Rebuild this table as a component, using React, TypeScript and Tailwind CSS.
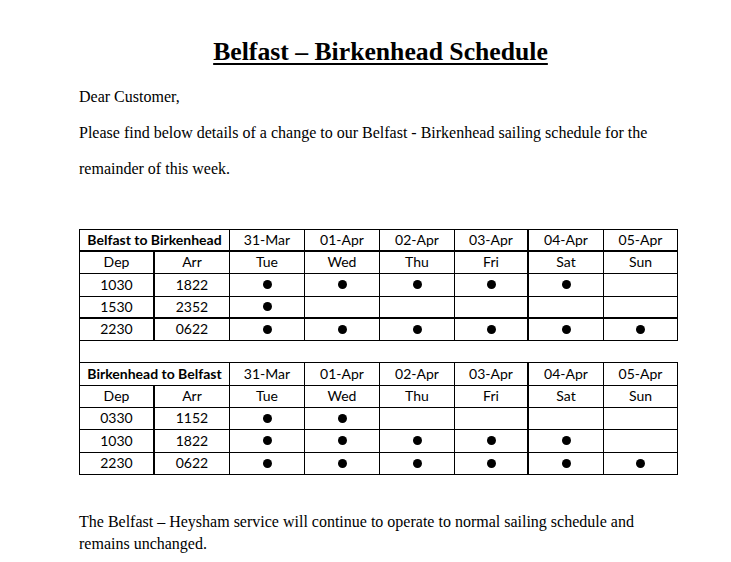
import React from "react";

const dates = ["31-Mar", "01-Apr", "02-Apr", "03-Apr", "04-Apr", "05-Apr"];
const days = ["Tue", "Wed", "Thu", "Fri", "Sat", "Sun"];
const dayW = ["w-[75px]", "w-[75px]", "w-[75px]", "w-[74px]", "w-[75px]", "w-[74px]"];

type Row = { dep: string; arr: string; on: boolean[]; h: string; thickB?: boolean };

const t1: Row[] = [
  { dep: "1030", arr: "1822", on: [true, true, true, true, true, false], h: "h-[23px]" },
  { dep: "1530", arr: "2352", on: [true, false, false, false, false, false], h: "h-[22px]", thickB: true },
  { dep: "2230", arr: "0622", on: [true, true, true, true, true, true], h: "h-[22px]" },
];
const t2: Row[] = [
  { dep: "0330", arr: "1152", on: [true, true, false, false, false, false], h: "h-[22px]" },
  { dep: "1030", arr: "1822", on: [true, true, true, true, true, false], h: "h-[23px]" },
  { dep: "2230", arr: "0622", on: [true, true, true, true, true, true], h: "h-[22px]" },
];

function Dot() {
  return <div className="w-[9px] h-[9px] rounded-full bg-black" />;
}

function cellCls(i: number, thickB?: boolean) {
  return [
    dayW[i],
    "h-full flex items-center justify-center border-black",
    i === 3 ? "border-r-2" : "border-r",
    thickB ? "border-b-2" : "border-b",
  ].join(" ");
}

function Header({ title, h, thickB }: { title: string; h: string; thickB?: boolean }) {
  return (
    <>
      <div className={`flex ${h}`}>
        <div className={`w-[150px] h-full flex items-center justify-center border-r border-black font-bold ${thickB ? "border-b-2" : "border-b"}`}>
          {title}
        </div>
        {dates.map((d, i) => (
          <div key={d} className={cellCls(i, thickB)}>
            {d}
          </div>
        ))}
      </div>
      <div className="flex h-[22px]">
        <div className="w-[75px] h-full flex items-center justify-center border-r-2 border-b border-black">Dep</div>
        <div className="w-[75px] h-full flex items-center justify-center border-r border-b border-black">Arr</div>
        {days.map((d, i) => (
          <div key={d} className={cellCls(i)}>
            {d}
          </div>
        ))}
      </div>
    </>
  );
}

function Rows({ rows }: { rows: Row[] }) {
  return (
    <>
      {rows.map((r, k) => (
        <div key={k} className={`flex ${r.h}`}>
          <div className={`w-[75px] h-full flex items-center justify-center border-r-2 border-black ${r.thickB ? "border-b-2" : "border-b"}`}>{r.dep}</div>
          <div className={`w-[75px] h-full flex items-center justify-center border-r border-black ${r.thickB ? "border-b-2" : "border-b"}`}>{r.arr}</div>
          {r.on.map((o, i) => (
            <div key={i} className={cellCls(i, r.thickB)}>
              {o ? <Dot /> : null}
            </div>
          ))}
        </div>
      ))}
    </>
  );
}

export default function App() {
  return (
    <div className="w-[731px] min-h-[562px] bg-white text-black">
      <div className="pl-[79px] pt-[36px]">
        <h1 className="w-[598px] pl-[5px] text-center font-['Liberation_Serif',serif] font-bold text-[25.7px] leading-[32px] underline decoration-[1.5px] underline-offset-[3px]">
          Belfast – Birkenhead Schedule
        </h1>
        <div className="font-['Liberation_Serif',serif] text-[16px]">
          <p className="mt-[10.6px] leading-[36px]">Dear Customer,</p>
          <p className="leading-[36px]">
            Please find below details of a change to our Belfast - Birkenhead sailing schedule for the
            <br />
            remainder of this week.
          </p>
        </div>
        <div className="mt-[42.4px] w-[599px] border-l border-t border-black font-['Lato',sans-serif] text-[14px] leading-none">
          <Header title="Belfast to Birkenhead" h="h-[22px]" thickB />
          <Rows rows={t1} />
          <div className="h-[22px] border-b border-black" />
          <div className="border-r-0">
            <div className="flex h-[23px]">
              <div className="w-[150px] h-full flex items-center justify-center border-r border-b border-black font-bold">
                Birkenhead to Belfast
              </div>
              {dates.map((d, i) => (
                <div key={d} className={cellCls(i)}>
                  {d}
                </div>
              ))}
            </div>
            <div className="flex h-[22px]">
              <div className="w-[75px] h-full flex items-center justify-center border-r-2 border-b border-black">Dep</div>
              <div className="w-[75px] h-full flex items-center justify-center border-r border-b border-black">Arr</div>
              {days.map((d, i) => (
                <div key={d} className={cellCls(i)}>
                  {d}
                </div>
              ))}
            </div>
            <Rows rows={t2} />
          </div>
        </div>
        <p className="mt-[35.6px] font-['Liberation_Serif',serif] text-[16px] leading-[22px]">
          The Belfast – Heysham service will continue to operate to normal sailing schedule and
          <br />
          remains unchanged.
        </p>
      </div>
    </div>
  );
}
